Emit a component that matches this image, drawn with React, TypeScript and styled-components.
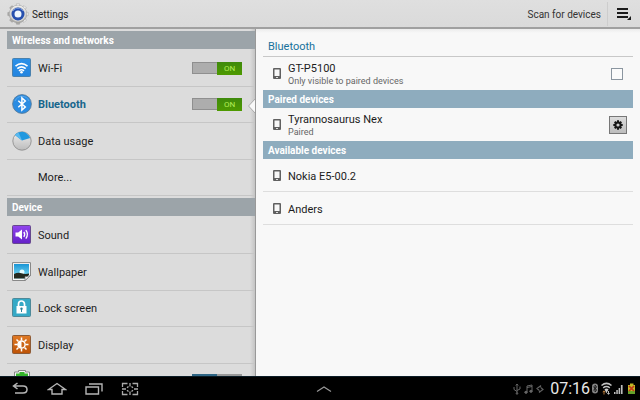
import React from "react";
import styled, { createGlobalStyle } from "styled-components";

const GlobalStyle = createGlobalStyle`
  * { box-sizing: border-box; }
  body { margin: 0; background: #000; }
  button, input { font: inherit; color: inherit; margin: 0; padding: 0; }
  button { border: 0; background: none; cursor: pointer; }
  svg { display: block; flex: none; }
  h1, h2 { margin: 0; font-size: inherit; font-weight: inherit; }
`;

const Screen = styled.div`
  display: flex;
  flex-direction: column;
  height: 100vh;
  overflow: hidden;
  font-family: Roboto, "Noto Sans", sans-serif;
  font-size: 11px;
  line-height: 14px;
  color: #1c1c1c;
`;

const ActionBar = styled.header`
  display: flex;
  flex: none;
  align-items: center;
  height: 29px;
  padding: 0 8px 0 7px;
  background: linear-gradient(#dfdfdf, #dadada);
  border-bottom: 2px solid #a0a0a0;
`;

const AppTitle = styled.h1`
  display: flex;
  flex: 1;
  align-items: center;
  gap: 3px;
  font-size: 10px;
  line-height: 16px;
`;

const ScanButton = styled.button`
  height: 24px;
  padding: 2px 6px 0 0;
  border-right: 1px solid #cdcdcd;
  font-size: 10px;
  color: #333;
`;

const MenuButton = styled.button`
  margin-left: 8px;
`;

const Body = styled.main`
  display: grid;
  grid-template-columns: 2fr 3fr;
  flex: 1;
  min-height: 0;
`;

const Sidebar = styled.nav`
  min-height: 0;
  overflow: hidden;
  padding-left: 7px;
  background: linear-gradient(to right, transparent calc(100% - 5px), #c4c4c4), #dcdcdc;
  border-right: 1px solid #999;
`;

const SideHeading = styled.h2`
  height: 18px;
  margin: 2px 0 1px;
  padding-left: 5px;
  background: #9ca4a9;
  color: #fff;
  font-size: 10px;
  font-weight: 700;
  line-height: 19px;
`;

const SideList = styled.div<{ $height: number }>`
  display: grid;
  grid-auto-rows: 1fr;
  height: ${(p) => p.$height}px;
`;

const SideRow = styled.div<{ $active?: boolean }>`
  position: relative;
  display: flex;
  align-items: center;
  padding: 0 13px 0 5px;
  border-bottom: 1px solid #c6c6c6;
  color: ${(p) => (p.$active ? "#17668c" : "#1c1c1c")};
  font-weight: ${(p) => (p.$active ? 700 : 400)};
`;

const LastRow = styled(SideRow)`
  height: 32px;
  border: 0;
`;

const SideLink = styled.a`
  display: flex;
  flex: 1;
  align-items: center;
  gap: 6px;
  color: inherit;
  text-decoration: none;
`;

const SideLabel = styled.span`
  padding-top: 2px;
`;

const IconSlot = styled.span`
  width: 20px;
  height: 20px;
`;

const Notch = styled.svg`
  position: absolute;
  right: -1px;
  top: 11px;
`;

const SwitchTrack = styled.label<{ $on: boolean }>`
  display: grid;
  grid-template-columns: 1fr 1fr;
  width: 50px;
  height: 12px;
  position: relative;
  background: ${(p) => (p.$on ? "#adadad" : "#999")};
  box-shadow: inset 0 0 0 1px ${(p) => (p.$on ? "#8f8f8f" : "#999")};
  cursor: pointer;
`;

const SwitchInput = styled.input`
  position: absolute;
  inset: 0;
  width: 100%;
  height: 100%;
  opacity: 0;
`;

const SwitchKnob = styled.span<{ $on: boolean }>`
  grid-column: ${(p) => (p.$on ? 2 : 1)};
  background: ${(p) => (p.$on ? "linear-gradient(#3f8a0c, #4e9a00)" : "#2f6685")};
  color: #b4ee55;
  font-size: 8px;
  font-weight: 400;
  line-height: 13px;
  text-align: center;
`;

const Panel = styled.section`
  min-width: 0;
  padding: 7px 7px 0;
  background: linear-gradient(#ececec, #f8f8f8 4px);
`;

const PanelTitle = styled.h2`
  height: 21px;
  padding-left: 5px;
  border-bottom: 1px solid #c8c8c8;
  color: #17719b;
  font-size: 11px;
  line-height: 21px;
`;

const PanelHeading = styled.h2`
  height: 18px;
  padding-left: 5px;
  background: #8eacbe;
  color: #fff;
  font-size: 10px;
  font-weight: 700;
  line-height: 19px;
`;

const DeviceRow = styled.div<{ $ruled?: boolean }>`
  display: flex;
  align-items: center;
  gap: 7px;
  height: 33px;
  padding: 0 6px 0 10px;
  border-bottom: ${(p) => (p.$ruled ? "1px solid #dedede" : "0")};
`;

const DeviceName = styled.label`
  flex: 1;
  padding-top: 2px;
  line-height: 13px;
`;

const DeviceNote = styled.small`
  display: block;
  color: #666;
  font-size: 9px;
  line-height: 12px;
`;

const CheckBox = styled.input`
  appearance: none;
  width: 12px;
  height: 12px;
  margin-right: 4px;
  border: 1px solid #8b96a0;
  background: #fbfbfb;
`;

const GearButton = styled.button`
  display: grid;
  place-items: center;
  width: 18px;
  height: 18px;
  border: 1px solid #777;
  background: linear-gradient(#dcdcdc, #bdbdbd);
`;

const SystemBar = styled.footer`
  display: grid;
  grid-template-columns: 1fr auto 1fr;
  align-items: center;
  flex: none;
  height: 24px;
  padding: 0 3px 0 11px;
  background: #000;
  border-top: 1px solid #0b1c26;
`;

const NavButtons = styled.div`
  display: flex;
  gap: 18px;
`;

const Status = styled.div`
  display: flex;
  align-items: center;
  justify-content: flex-end;
`;

const Notices = styled.div`
  display: flex;
  gap: 3px;
`;

const Clock = styled.time`
  margin: 0 1px 0 6px;
  color: #e8e8e8;
  font-size: 16px;
  line-height: 20px;
`;

const SettingsIcon = () => (
  <svg width="22" height="22" viewBox="0 0 22 22">
    <defs>
      <linearGradient id="gearMetal" x2="0" y2="1"><stop stopColor="#fafafa" /><stop offset="1" stopColor="#aaa9a5" /></linearGradient>
    </defs>
    <g fill="url(#gearMetal)" stroke="#999" strokeWidth=".5">
      {[0, 45, 90, 135].map((a) => (
        <path key={a} d="M9 3 9.5 .8h3L13 3v16l-.5 2.2h-3L9 19z" transform={`rotate(${a} 11 11)`} />
      ))}
      <circle cx="11" cy="11" r="8.8" />
    </g>
    <circle cx="11" cy="11" r="7.5" fill="#dcdad5" />
    <circle cx="11" cy="11" r="5" fill="#eef5ff" stroke="#2750ae" strokeWidth="3" />
    <path d="M6 8a6 6 0 0 1 10 0" fill="none" stroke="#6d92db" />
    <circle cx="11" cy="11" r="3" fill="#eef6fd" />
  </svg>
);

const MenuIcon = () => (
  <svg width="16" height="14" viewBox="0 0 16 14" fill="#1b1b1b">
    <path d="M1 1h11v2H1zM1 5h11v2H1zM1 9h11v2H1zM15 9v4h-4z" />
  </svg>
);

const WifiIcon = () => (
  <svg width="20" height="20" viewBox="0 0 20 20">
    <defs><linearGradient id="wifiBlue" x2="0" y2="1"><stop stopColor="#2c91e8" /><stop offset="1" stopColor="#2384df" /></linearGradient></defs>
    <rect x=".5" y=".5" width="18" height="18" rx="1" fill="url(#wifiBlue)" stroke="#4981ae" />
    <g fill="none" stroke="#fff" strokeWidth="1.6">
      <path d="M3.5 8.2Q9.5 3 15.5 8.2M5.3 10.6Q9.5 7 13.7 10.6M7 12.8Q9.5 10.8 12 12.8" />
    </g>
    <circle cx="9.5" cy="14.3" r="1.3" fill="#fff" />
  </svg>
);

const BluetoothIcon = () => (
  <svg width="20" height="20" viewBox="0 0 20 20">
    <circle cx="10" cy="10" r="9.4" fill="#2b8ce2" stroke="#557793" strokeWidth=".8" />
    <path d="M3 7a7.6 7.6 0 0 1 14 0" fill="none" stroke="#58a9ed" />
    <path d="M6.3 6.8l7 6.2-3.4 3V4l3.4 3-7 6.2" fill="none" stroke="#fff" strokeWidth="1.5" />
  </svg>
);

const DataIcon = () => (
  <svg width="20" height="20" viewBox="0 0 20 20">
    <defs><linearGradient id="pieGray" x2="0" y2="1"><stop stopColor="#eee" /><stop offset="1" stopColor="#bcbcbc" /></linearGradient></defs>
    <circle cx="10" cy="10" r="9.2" fill="url(#pieGray)" stroke="#888" strokeWidth=".8" />
    <path d="M10 9.5 3 4Q6 .8 10.5.8 15 1 18.2 7z" fill="#2098df" />
    <path d="M10 9.5 3 4Q4.5 2.2 6.5 1.5z" fill="#59b9ef" />
  </svg>
);

const SoundIcon = () => (
  <svg width="20" height="20" viewBox="0 0 20 20">
    <defs><linearGradient id="soundViolet" x2="0" y2="1"><stop stopColor="#9145ee" /><stop offset="1" stopColor="#6420c8" /></linearGradient></defs>
    <rect x=".5" y=".5" width="18" height="18" rx="1" fill="url(#soundViolet)" stroke="#66498d" />
    <path d="M3.5 7.5h2.7L10 4.5v10l-3.8-3H3.5z" fill="#fff" />
    <path d="M11.8 7q1.8 2.3 0 4.8M13.8 5.2q3.2 4 0 8.4" fill="none" stroke="#fff" strokeWidth="1.3" />
  </svg>
);

const WallpaperIcon = () => (
  <svg width="20" height="20" viewBox="0 0 20 20">
    <defs>
      <linearGradient id="sky" x2="0" y2="1"><stop stopColor="#1995d6" /><stop offset="1" stopColor="#8de7f5" /></linearGradient>
    </defs>
    <path d="M.5 .6h18v13L13 18.5H.5z" fill="#f8f8f8" stroke="#888" />
    <path d="M2 2h15v11l-4 3.5H2z" fill="url(#sky)" />
    <circle cx="10" cy="10" r="2.5" fill="#e4fcff" />
    <path d="M2 12Q6 9.8 9.5 11.2T17 11.5v1.5l-4 3.5H2z" fill="#242a20" />
    <path d="M18.5 13.5 13 18.5V14.5q3 .5 5.5-1z" fill="#eee" stroke="#777" strokeWidth=".7" />
  </svg>
);

const LockIcon = () => (
  <svg width="20" height="20" viewBox="0 0 20 20">
    <rect x=".5" y=".5" width="18" height="18" rx="1" fill="#35a9c6" stroke="#4e8999" />
    <path d="M6.5 8.5V6a3 3 0 0 1 6 0v2.5" fill="none" stroke="#fff" strokeWidth="1.7" />
    <path d="M4.5 8h10v7.5h-10z" fill="#fff" />
    <circle cx="9.5" cy="10.8" r="1.2" fill="#27809a" />
    <path d="M9 11h1v3H9z" fill="#27809a" />
  </svg>
);

const DisplayIcon = () => (
  <svg width="20" height="20" viewBox="0 0 20 20">
    <defs><linearGradient id="displayOrange" x2="0" y2="1"><stop stopColor="#e07a25" /><stop offset="1" stopColor="#bd5205" /></linearGradient></defs>
    <rect x=".5" y=".5" width="18" height="18" rx="1" fill="url(#displayOrange)" stroke="#8d5b36" />
    <g stroke="#fff" strokeWidth="1.5">
      <path d="M9.5 2.5v3M9.5 13.5v3M2.5 9.5h3M13.5 9.5h3M4.5 4.5l2 2M12.5 12.5l2 2M14.5 4.5l-2 2M6.5 12.5l-2 2" />
      <circle cx="9.5" cy="9.5" r="3.6" fill="#cb6517" />
    </g>
    <path d="M9.5 6a3.5 3.5 0 0 0 0 7z" fill="#fff" />
  </svg>
);

const BatteryIcon = () => (
  <svg width="20" height="20" viewBox="0 0 20 20">
    <path d="M2.5 19V2h4V.5h7V2h4v17z" fill="#f6f6f6" stroke="#888" />
    <path d="M4 3.5h3.5V2h5v1.5H16V19H4z" fill="#35b52b" />
  </svg>
);

const PhoneIcon = () => (
  <svg width="8" height="11" viewBox="0 0 8 11">
    <rect x="0" y="0" width="8" height="11" rx="1" fill="#606060" />
    <path d="M1.5 1.5h5v6.5h-5z" fill="#f8f8f8" />
    <path d="M3 9h2v1H3z" fill="#ddd" />
  </svg>
);

const GearIcon = () => (
  <svg width="10" height="10" viewBox="0 0 10 10">
    <g stroke="#161616" fill="none">
      <path strokeWidth="2" d="M5 .3v2M5 7.7v2M.3 5h2M7.7 5h2M1.7 1.7 3 3M7 7l1.3 1.3M8.3 1.7 7 3M3 7 1.7 8.3" />
      <circle cx="5" cy="5" r="2.6" strokeWidth="2" />
    </g>
  </svg>
);

const BackIcon = () => (
  <svg width="18" height="14" viewBox="0 0 18 14" fill="none" stroke="#b5b5b5" strokeWidth="1.5">
    <path d="M3 4h9q4 0 4 3.5T12 11H4M6.5 1 2.5 4l4 3" />
  </svg>
);
const HomeIcon = () => (
  <svg width="20" height="14" viewBox="0 0 20 14" fill="none" stroke="#b5b5b5" strokeWidth="1.4">
    <path d="M1.5 7.5 10 1.5l8.5 6H15V12H5V7.5z" />
  </svg>
);
const RecentIcon = () => (
  <svg width="18" height="14" viewBox="0 0 18 14" fill="none" stroke="#b5b5b5" strokeWidth="1.4">
    <path d="M1 5h12.5v7H1zM4 2h13v7.5" />
  </svg>
);
const CaptureIcon = () => (
  <svg width="18" height="14" viewBox="0 0 18 14" fill="none" stroke="#aaa" strokeWidth="1.3">
    <path d="M1.5 5V1.5h5M11.5 1.5h5V5M16.5 9v3.5h-5M6.5 12.5h-5V9M9 1v3.5M9 9.5V13M1 7h4M13 7h4" />
    <path d="M6 5.8 7.5 4.5M10.5 4.5 12 5.8M12 8.2 10.5 9.5M7.5 9.5 6 8.2" />
  </svg>
);
const UpIcon = () => (
  <svg width="16" height="8" viewBox="0 0 16 8" fill="none" stroke="#999" strokeWidth="1.2">
    <path d="M1 6.5 8 2l7 4.5" />
  </svg>
);

const UsbIcon = () => (
  <svg width="8" height="12" viewBox="0 0 8 12" fill="none" stroke="#666" strokeWidth="1">
    <path d="M4 1v10M1 4v2.5L4 8.5M7 3.5V6L4 7.5M2.8 2.5 4 1l1.2 1.5" />
    <circle cx="4" cy="10.5" r=".8" />
  </svg>
);
const MusicIcon = () => (
  <svg width="9" height="12" viewBox="0 0 9 12" fill="#666" stroke="#666">
    <path d="M3 9V3l5-1v6M3 4.5l5-1" fill="none" />
    <ellipse cx="2" cy="9.3" rx="1.3" ry="1" /><ellipse cx="7" cy="8.3" rx="1.3" ry="1" />
  </svg>
);
const SyncIcon = () => (
  <svg width="8" height="12" viewBox="0 0 8 12" fill="none" stroke="#5f5f5f" strokeWidth="1.2">
    <path d="M5 2.5 1 5.5l2 1.7M3 9.5l4-3-2-1.7M4.5 2.5v2M3.5 9.5v-2" />
  </svg>
);
const StatusIcons = () => (
  <svg width="46" height="14" viewBox="0 0 46 14">
    <rect x="1" y="1.5" width="6" height="10" rx="3" fill="#858585" />
    <path d="m2.3 4.5 3.4 3.7L4 9.8V3.2l1.7 1.6-3.4 3.7" fill="none" stroke="#111" strokeWidth=".9" />
    <g fill="none" stroke="#c2c2c2" strokeWidth="1.5">
      <path d="M10.5 3.5q5-4.2 10 0M12.2 5.8q3.3-2.6 6.6 0" />
    </g>
    <path d="m13.5 7.3 2 4 2-4q-2-1.4-4 0z" fill="#ccc" />
    <path d="m13 12.5 0-3M11.8 10.2 13 8.8l1.2 1.4" stroke="#bd7d3a" fill="none" />
    <path d="M17.5 9v3.3M16.3 11l1.2 1.3 1.2-1.3" stroke="#bbb" fill="none" />
    <path d="M23 12h1.5v-2H23zM25.3 12h1.5V8h-1.5zM27.6 12h1.5V6h-1.5zM29.9 12h1.7V3h-1.7z" fill="#bdbdbd" />
    <path d="M37 3h2V1.5h3.5V3H44v9h-7z" fill="#c4b927" />
    <path d="M37 9h7v3h-7z" fill="#66a22a" />
    <path d="m38 4 5 5m0-5-5 5" stroke="#c43916" strokeWidth="1.7" />
  </svg>
);

function Toggle({ name, on = true }: { name: string; on?: boolean }) {
  return (
    <SwitchTrack $on={on}>
      <SwitchInput type="checkbox" role="switch" aria-label={name} defaultChecked={on} />
      <SwitchKnob $on={on}>{on ? "ON" : ""}</SwitchKnob>
    </SwitchTrack>
  );
}

type Item = { name: string; Icon?: React.FC; toggle?: boolean; active?: boolean };

const wireless: Item[] = [
  { name: "Wi-Fi", Icon: WifiIcon, toggle: true },
  { name: "Bluetooth", Icon: BluetoothIcon, toggle: true, active: true },
  { name: "Data usage", Icon: DataIcon },
  { name: "More..." },
];
const device: Item[] = [
  { name: "Sound", Icon: SoundIcon },
  { name: "Wallpaper", Icon: WallpaperIcon },
  { name: "Lock screen", Icon: LockIcon },
  { name: "Display", Icon: DisplayIcon },
];

function SideSection({ title, items, height }: { title: string; items: Item[]; height: number }) {
  return (
    <>
      <SideHeading>{title}</SideHeading>
      <SideList $height={height}>
        {items.map(({ name, Icon, toggle, active }) => (
          <SideRow key={name} $active={active}>
            <SideLink href="#" aria-current={active ? "page" : undefined}>
              <IconSlot>{Icon && <Icon />}</IconSlot>
              <SideLabel>{name}</SideLabel>
            </SideLink>
            {toggle && <Toggle name={name} />}
            {active && (
              <Notch width="8" height="16" viewBox="0 0 8 16">
                <path d="M8 0 0 8l8 8z" fill="#f8f8f8" />
                <path d="M8 0 .5 8 8 16" fill="none" stroke="#a5a5a5" />
              </Notch>
            )}
          </SideRow>
        ))}
      </SideList>
    </>
  );
}

export default function App() {
  return (
    <>
      <GlobalStyle />
      <Screen>
        <ActionBar>
          <AppTitle>
            <SettingsIcon />
            <SideLabel>Settings</SideLabel>
          </AppTitle>
          <ScanButton>Scan for devices</ScanButton>
          <MenuButton aria-label="Menu"><MenuIcon /></MenuButton>
        </ActionBar>
        <Body>
          <Sidebar>
            <SideSection title="Wireless and networks" items={wireless} height={146} />
            <SideSection title="Device" items={device} height={147} />
            <LastRow>
              <SideLink href="#" aria-label="Power saving"><BatteryIcon /></SideLink>
              <Toggle name="Power saving" on={false} />
            </LastRow>
          </Sidebar>
          <Panel>
            <PanelTitle>Bluetooth</PanelTitle>
            <DeviceRow>
              <PhoneIcon />
              <DeviceName htmlFor="visible">
                GT-P5100
                <DeviceNote>Only visible to paired devices</DeviceNote>
              </DeviceName>
              <CheckBox id="visible" type="checkbox" />
            </DeviceRow>
            <PanelHeading>Paired devices</PanelHeading>
            <DeviceRow>
              <PhoneIcon />
              <DeviceName htmlFor="paired-options">
                Tyrannosaurus Nex
                <DeviceNote>Paired</DeviceNote>
              </DeviceName>
              <GearButton id="paired-options" aria-label="Device settings"><GearIcon /></GearButton>
            </DeviceRow>
            <PanelHeading>Available devices</PanelHeading>
            <DeviceRow $ruled><PhoneIcon /><DeviceName as="span">Nokia E5-00.2</DeviceName></DeviceRow>
            <DeviceRow $ruled><PhoneIcon /><DeviceName as="span">Anders</DeviceName></DeviceRow>
          </Panel>
        </Body>
        <SystemBar>
          <NavButtons>
            <button aria-label="Back"><BackIcon /></button>
            <button aria-label="Home"><HomeIcon /></button>
            <button aria-label="Recent apps"><RecentIcon /></button>
            <button aria-label="Screenshot"><CaptureIcon /></button>
          </NavButtons>
          <button aria-label="Open tray"><UpIcon /></button>
          <Status>
            <Notices><UsbIcon /><MusicIcon /><SyncIcon /></Notices>
            <Clock>07:16</Clock>
            <StatusIcons />
          </Status>
        </SystemBar>
      </Screen>
    </>
  );
}
